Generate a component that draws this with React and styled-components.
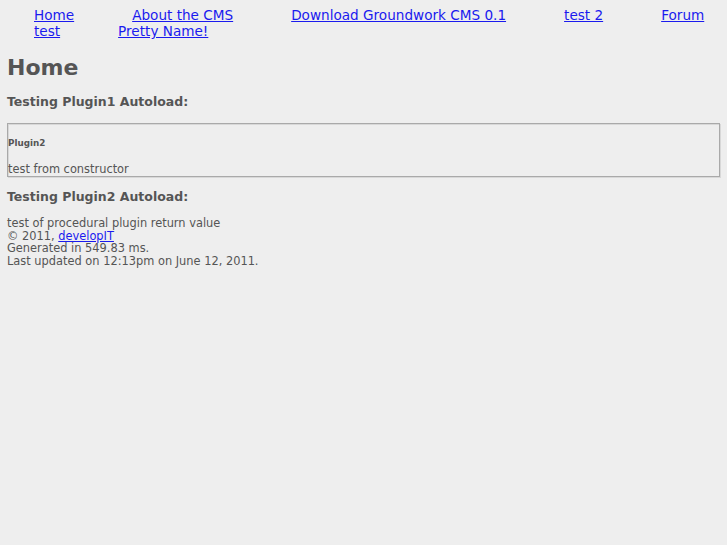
import React from "react";
import styled, { createGlobalStyle } from "styled-components";

const GlobalStyle = createGlobalStyle`
  html, body {
    margin: 0;
    padding: 0;
    background: #eeeeee;
  }
  body {
    font-family: "DejaVu Sans", Verdana, sans-serif;
    font-size: 11.4px;
    color: #555555;
  }
`;

const navItems = [
  "Home",
  "About the CMS",
  "Download Groundwork CMS 0.1",
  "test 2",
  "Forum",
  "test",
  "Pretty Name!",
];

const Page = styled.div`
  padding: 7px 7px 8px 7px;
`;

const NavList = styled.ul`
  list-style: none;
  margin: 0;
  padding: 0 0 0 27px;
  display: flex;
  flex-wrap: wrap;
  column-gap: 58px;
  font-size: 13.6px;
  line-height: 16px;
`;

const NavItem = styled.li`
  margin: 0;
`;

const Link = styled.a`
  color: #1a1aee;
  text-decoration: underline;
`;

const Title = styled.h1`
  font-size: 22px;
  font-weight: bold;
  margin: 16px 0 14px 0;
  line-height: 26px;
`;

const SubTitle = styled.h3`
  font-size: 12.5px;
  font-weight: bold;
  margin: ${(p) => p.$top || 0}px 0 ${(p) => p.$bottom || 0}px 0;
  line-height: 14px;
`;

const PluginBox = styled.div`
  margin: 0;
  border: 1px solid #a9a9a9;
  box-shadow: inset 1px 1px 0 #d8d8d8, 1px 1px 0 #d8d8d8;
  padding: 1px 0 0 0;
`;

const PluginName = styled.h5`
  font-size: 8.8px;
  font-weight: bold;
  margin: 13px 0 14px 0;
  line-height: 11px;
`;

const Line = styled.div`
  line-height: 12.67px;
`;

const BoxLine = styled(Line)`
  line-height: 13px;
`;

const Footer = styled.div`
  margin-top: 13px;
`;

export default function App() {
  return (
    <>
      <GlobalStyle />
      <Page>
        <NavList>
          {navItems.map((item) => (
            <NavItem key={item}>
              <Link href="#">{item}</Link>
            </NavItem>
          ))}
        </NavList>
        <Title>Home</Title>
        <SubTitle $bottom={14}>Testing Plugin1 Autoload:</SubTitle>
        <PluginBox>
          <PluginName>Plugin2</PluginName>
          <BoxLine>test from constructor</BoxLine>
        </PluginBox>
        <SubTitle $top={13}>Testing Plugin2 Autoload:</SubTitle>
        <Footer>
          <Line>test of procedural plugin return value</Line>
          <Line>
            © 2011, <Link href="#">developIT</Link>
          </Line>
          <Line>Generated in 549.83 ms.</Line>
          <Line>Last updated on 12:13pm on June 12, 2011.</Line>
        </Footer>
      </Page>
    </>
  );
}
